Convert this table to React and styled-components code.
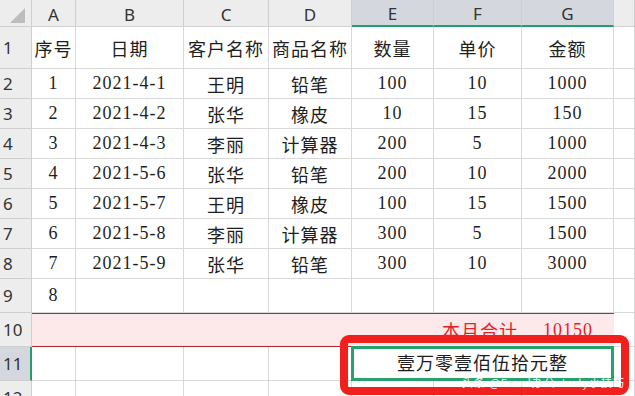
import styled, { createGlobalStyle } from "styled-components";

const GlobalStyle = createGlobalStyle`
  html, body {
    margin: 0;
    padding: 0;
    background: #ffffff;
    overflow: hidden;
  }
`;

const COLS = ["A", "B", "C", "D", "E", "F", "G"];
const HEADERS = ["序号", "日期", "客户名称", "商品名称", "数量", "单价", "金额"];
const ROWS = [
  [1, "2021-4-1", "王明", "铅笔", 100, 10, 1000],
  [2, "2021-4-2", "张华", "橡皮", 10, 15, 150],
  [3, "2021-4-3", "李丽", "计算器", 200, 5, 1000],
  [4, "2021-5-6", "张华", "铅笔", 200, 10, 2000],
  [5, "2021-5-7", "王明", "橡皮", 100, 15, 1500],
  [6, "2021-5-8", "李丽", "计算器", 300, 5, 1500],
  [7, "2021-5-9", "张华", "铅笔", 300, 10, 3000],
  [8, "", "", "", "", "", ""],
];

const Wrap = styled.div`
  position: relative;
  width: 635px;
  height: 396px;
  overflow: hidden;
`;

const Sheet = styled.div`
  display: grid;
  grid-template-columns: 32px 44px 108px 85px 83px 82px 88px 92px 1fr;
  grid-template-rows: 27px 42px repeat(7, 30px) repeat(4, 34px);
  font-family: "Liberation Serif", "Noto Sans CJK SC", serif;
  font-size: 18px;
  letter-spacing: 1px;
  color: #1e1e1e;
`;

const Head = styled.div`
  box-sizing: border-box;
  display: flex;
  align-items: center;
  justify-content: center;
  font-family: "Noto Sans", "Noto Sans CJK SC", sans-serif;
  font-size: 17px;
  letter-spacing: 0;
  color: #333;
  background: ${(p) => (p.$active ? "#d4d7dd" : "#ededed")};
  border-right: 1px solid #cfcfcf;
  border-bottom: 1px solid #cfcfcf;
`;

const Corner = styled(Head)`
  position: relative;
`;

const ColHead = styled(Head)`
  border-bottom: ${(p) => (p.$active ? "2px solid #22a06b" : "1px solid #cfcfcf")};
  padding-top: 2px;
`;

const RowHead = styled(Head)`
  justify-content: flex-start;
  padding-left: 3px;
  border-right: ${(p) => (p.$active ? "2px solid #22a06b" : "1px solid #cfcfcf")};
`;

const Cell = styled.div`
  box-sizing: border-box;
  display: flex;
  align-items: center;
  justify-content: ${(p) => p.$align || "center"};
  grid-column: ${(p) => (p.$span ? p.$span : "auto")};
  white-space: nowrap;
  border-right: 1px solid #d9d9d9;
  border-bottom: 1px solid #d9d9d9;
`;

const TotalCell = styled(Cell)`
  background: #fde9e9;
  color: #e0242a;
  border-right: none;
  border-top: 1px solid #b8262b;
  border-bottom: 1px solid #b8262b;
  padding-right: ${(p) => (p.$align === "flex-end" ? "4px" : "0")};
`;

const SelectBox = styled(Cell)`
  border: 3px solid #26a36c;
  margin: -1px 0 0 -1px;
  padding-bottom: 3px;
`;

const Annotation = styled.div`
  position: absolute;
  left: 340px;
  top: 335px;
  width: 289px;
  height: 60px;
  box-sizing: border-box;
  border: 8px solid #f2201c;
  border-radius: 9px;
  pointer-events: none;
`;

const Watermark = styled.div`
  position: absolute;
  left: 462px;
  top: 375px;
  white-space: nowrap;
  font-family: "Noto Sans CJK SC", sans-serif;
  font-size: 11px;
  line-height: 14px;
  color: rgba(255, 255, 255, 0.9);
  text-shadow: 0 0 1px rgba(150, 160, 180, 0.25);
  letter-spacing: 1px;
`;

function CornerMark() {
  return (
    <svg width="15" height="15" viewBox="0 0 15 15" style={{ position: "absolute", right: 6, bottom: 3 }}>
      <polygon points="15,0 15,15 0,15" fill="#bdbdbd" />
    </svg>
  );
}

export default function App() {
  return (
    <>
      <GlobalStyle />
      <Wrap>
        <Sheet>
          <Corner>
            <CornerMark />
          </Corner>
          {COLS.map((c, i) => (
            <ColHead key={c} $active={i >= 4}>
              {c}
            </ColHead>
          ))}
          <ColHead />

          <RowHead>1</RowHead>
          {HEADERS.map((h) => (
            <Cell key={h}>{h}</Cell>
          ))}
          <Cell />

          {ROWS.map((r, ri) => [
            <RowHead key={"h" + ri}>{ri + 2}</RowHead>,
            ...r.map((v, ci) => <Cell key={ri + "-" + ci}>{v}</Cell>),
            <Cell key={"x" + ri} />,
          ])}

          <RowHead>10</RowHead>
          <TotalCell $span="2 / 8" $align="flex-end">本月合计</TotalCell>
          <TotalCell>10150</TotalCell>
          <Cell />

          <RowHead $active>11</RowHead>
          <Cell />
          <Cell />
          <Cell />
          <Cell />
          <SelectBox $span="6 / 9">壹万零壹佰伍拾元整</SelectBox>
          <Cell />

          <RowHead>12</RowHead>
          {COLS.map((c) => (
            <Cell key={"r12" + c} />
          ))}
          <Cell />
        </Sheet>
        <Annotation />
        <Watermark>头条 @Excel办公study小技巧</Watermark>
      </Wrap>
    </>
  );
}
